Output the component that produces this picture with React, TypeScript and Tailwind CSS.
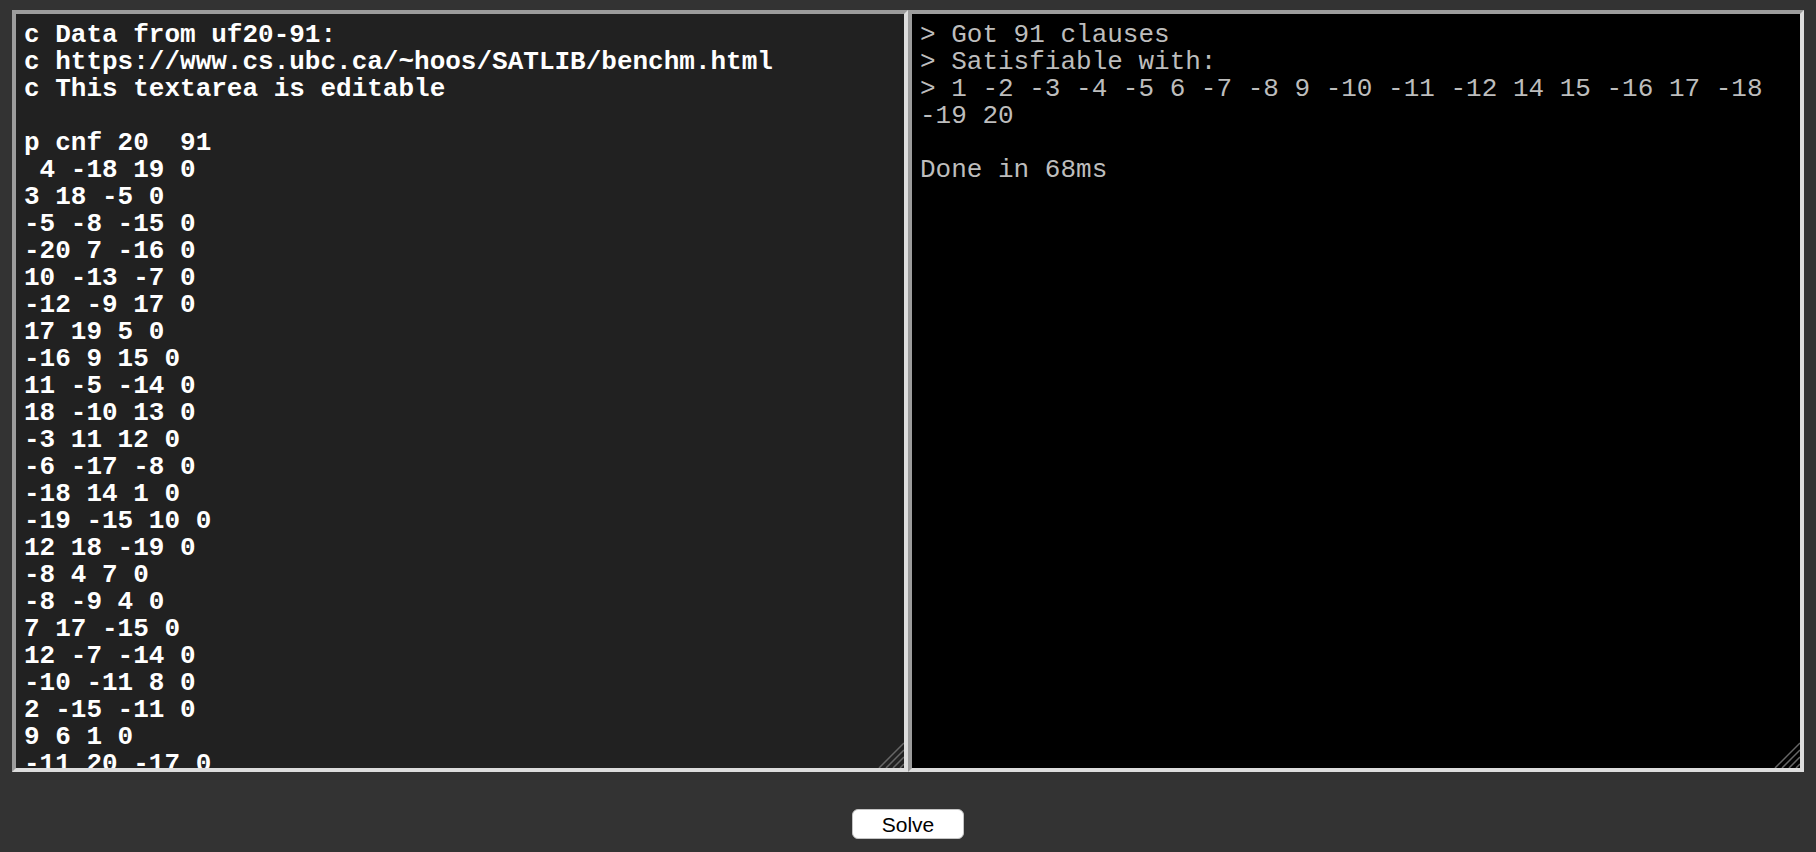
import React from 'react';

const cnf = `c Data from uf20-91:
c https://www.cs.ubc.ca/~hoos/SATLIB/benchm.html
c This textarea is editable

p cnf 20  91
 4 -18 19 0
3 18 -5 0
-5 -8 -15 0
-20 7 -16 0
10 -13 -7 0
-12 -9 17 0
17 19 5 0
-16 9 15 0
11 -5 -14 0
18 -10 13 0
-3 11 12 0
-6 -17 -8 0
-18 14 1 0
-19 -15 10 0
12 18 -19 0
-8 4 7 0
-8 -9 4 0
7 17 -15 0
12 -7 -14 0
-10 -11 8 0
2 -15 -11 0
9 6 1 0
-11 20 -17 0
9 -15 13 0
12 -7 -17 0
-18 -2 20 0
20 12 4 0
19 11 14 0
-16 18 -4 0
-1 -17 -19 0
-13 15 10 0
-12 -14 -13 0
12 -14 -7 0`;

const output = `> Got 91 clauses
> Satisfiable with:
> 1 -2 -3 -4 -5 6 -7 -8 9 -10 -11 -12 14 15 -16 17 -18 -19 20

Done in 68ms`;

// shared bevelled frame, like a legacy inset textarea border
const frame =
  'block w-full h-full resize-none border-4 border-t-[#9c9c9c] border-l-[#9c9c9c] border-b-[#dddddd] border-r-[#dddddd] pt-[8px] pl-[8px] pr-[6px] overflow-hidden outline-none text-[26px] leading-[27px] font-["Liberation_Mono",monospace]';

const Grip = () => (
  <svg
    className="absolute right-[4px] bottom-[4px] pointer-events-none"
    width="26"
    height="26"
    viewBox="0 0 26 26"
  >
    <g stroke="#666" strokeWidth="1.5">
      <line x1="26" y1="1" x2="1" y2="26" />
      <line x1="26" y1="8" x2="8" y2="26" />
      <line x1="26" y1="15" x2="15" y2="26" />
      <line x1="26" y1="22" x2="22" y2="26" />
    </g>
  </svg>
);

export default function App() {
  return (
    <div className="min-h-screen bg-[#333333] pt-[10px] px-[12px]">
      <div className="flex h-[762px]">
        <div className="relative flex-1 min-w-0">
          <textarea
            className={`${frame} bg-[#212121] text-white font-bold`}
            defaultValue={cnf}
            spellCheck={false}
          />
          <Grip />
        </div>
        <div className="relative flex-1 min-w-0">
          <textarea
            className={`${frame} bg-black text-[#bdbdbd]`}
            value={output}
            readOnly
            spellCheck={false}
          />
          <Grip />
        </div>
      </div>
      <div className="flex justify-center mt-[37px]">
        <button className="w-[112px] h-[30px] rounded-[6px] bg-white border border-[#c4c4c4] text-black text-[21px] leading-none font-['Liberation_Sans',Arial,sans-serif]">
          Solve
        </button>
      </div>
    </div>
  );
}
